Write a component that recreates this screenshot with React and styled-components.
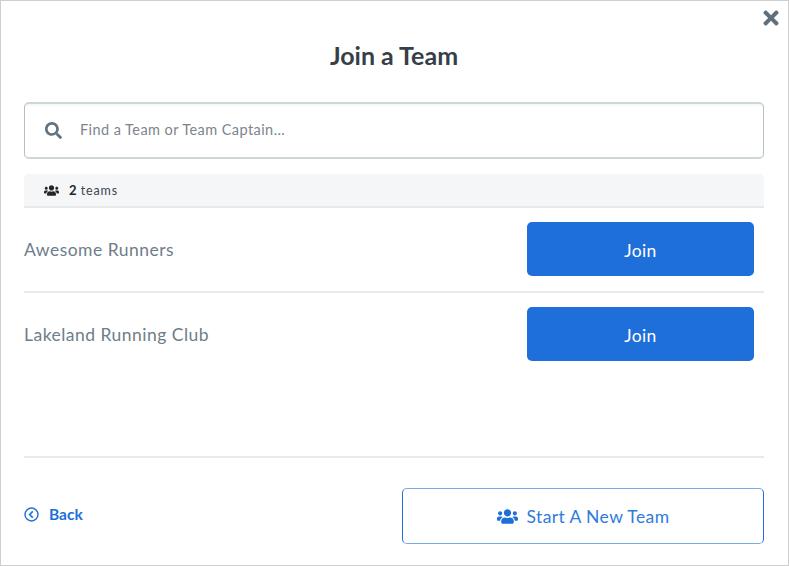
import React from 'react';
import styled, { createGlobalStyle } from 'styled-components';
import { FaSearch, FaTimes, FaUsers } from 'react-icons/fa';

const teams = ['Awesome Runners', 'Lakeland Running Club'];

function App() {
  return (
    <>
      <GlobalStyle />
      <Modal>
        <CloseButton>
          <FaTimes />
        </CloseButton>
        <Title>Join a Team</Title>

        <SearchBox>
          <SearchIcon>
            <FaSearch />
          </SearchIcon>
          <SearchInput placeholder='Find a Team or Team Captain...' />
        </SearchBox>

        <CountBar>
          <FaUsers />
          <CountText>
            <b>2</b> teams
          </CountText>
        </CountBar>

        <TeamList>
          {teams.map((team) => (
            <TeamRow key={team}>
              <TeamName>{team}</TeamName>
              <JoinButton>Join</JoinButton>
            </TeamRow>
          ))}
        </TeamList>

        <Footer>
          <BackLink>
            <svg width='15' height='15' viewBox='0 0 15 15' fill='none' stroke='currentColor'>
              <circle cx='7.5' cy='7.5' r='6.5' strokeWidth='1.4' />
              <path d='M8.8 4.4 5.7 7.5l3.1 3.1' strokeWidth='1.6' />
            </svg>
            Back
          </BackLink>
          <NewTeamButton>
            <FaUsers />
            Start A New Team
          </NewTeamButton>
        </Footer>
      </Modal>
    </>
  );
}

const GlobalStyle = createGlobalStyle`
  html, body {
    margin: 0;
    padding: 0;
    background: #fff;
  }

  body {
    font-family: Lato, 'Open Sans', sans-serif;
  }
`;

const Modal = styled.div`
  position: relative;
  box-sizing: border-box;
  width: 789px;
  height: 566px;
  padding: 0 24px 0 23px;
  border: 1px solid #cfcfcf;
  background: #fff;
  display: flex;
  flex-direction: column;
`;

const CloseButton = styled.div`
  position: absolute;
  top: 5px;
  right: 5px;
  width: 24px;
  height: 24px;
  display: flex;
  align-items: center;
  justify-content: center;
  color: #5f6f7c;
  font-size: 22px;
`;

const Title = styled.h1`
  margin: 0;
  padding-top: 40px;
  height: 61px;
  line-height: 28px;
  font-family: Lato, sans-serif;
  font-size: 25px;
  font-weight: 700;
  text-align: center;
  color: #363f48;
`;

const SearchBox = styled.div`
  box-sizing: border-box;
  height: 57px;
  display: flex;
  align-items: center;
  border: 1px solid #b4c0c6;
  border-top: 2px solid #ced6da;
  border-bottom: 2px solid #ced6da;
  border-radius: 5px;
  box-shadow: inset 0 3px 3px -2px #eef2f3;
  background: #fff;
`;

const SearchIcon = styled.div`
  width: 55px;
  padding-left: 20px;
  box-sizing: border-box;
  display: flex;
  color: #5f7383;
  font-size: 17px;
`;

const SearchInput = styled.input`
  flex: 1;
  padding: 0;
  margin-bottom: 2px;
  border: none;
  outline: none;
  font-family: Lato, sans-serif;
  font-size: 14.5px;
  letter-spacing: 0.43px;
  color: #3c4650;

  &::placeholder {
    color: #7c858c;
    opacity: 1;
  }
`;

const CountBar = styled.div`
  box-sizing: border-box;
  height: 34px;
  margin-top: 15px;
  padding: 0 20px;
  display: flex;
  align-items: center;
  gap: 10px;
  background: #f5f6f8;
  border-bottom: 2px solid #e7e9eb;
  border-radius: 5px 5px 0 0;
  color: #20262c;
  font-size: 15px;
`;

const CountText = styled.span`
  font-size: 12.5px;
  letter-spacing: 0.9px;
  color: #3c4650;

  b {
    font-size: 13px;
    letter-spacing: 0;
    color: #20262c;
  }
`;

const TeamList = styled.div`
  flex: 1;
`;

const TeamRow = styled.div`
  box-sizing: border-box;
  height: 85px;
  padding: 13px 10px 14px 0;
  display: flex;
  align-items: center;
  justify-content: space-between;
  border-bottom: 2px solid #e7e9eb;

  &:last-child {
    border-bottom-color: transparent;
  }
`;

const TeamName = styled.div`
  padding-top: 1px;
  font-size: 17.5px;
  letter-spacing: 0.48px;
  color: #6e7d8a;
`;

const JoinButton = styled.button`
  width: 227px;
  height: 54px;
  padding: 2px 0 0;
  border: none;
  border-radius: 5px;
  background: #1e6fd9;
  color: #fff;
  font-family: Lato, sans-serif;
  font-size: 17.5px;
  letter-spacing: 0.4px;
`;

const Footer = styled.div`
  height: 109px;
  box-sizing: border-box;
  border-top: 2px solid #e7e9eb;
  padding-top: 30px;
  display: flex;
  justify-content: space-between;
  align-items: flex-start;
`;

const BackLink = styled.div`
  height: 52px;
  display: flex;
  align-items: center;
  gap: 10px;
  color: #1e6fd9;
  font-size: 15.5px;
  font-weight: 700;
`;

const NewTeamButton = styled.button`
  box-sizing: border-box;
  width: 362px;
  height: 56px;
  display: flex;
  align-items: center;
  justify-content: center;
  gap: 9px;
  background: #fff;
  border: 1px solid #1e6fd9;
  border-top-color: #7aa9e8;
  border-bottom-color: #7aa9e8;
  border-radius: 5px;
  color: #2f7bdc;
  font-family: Lato, sans-serif;
  font-size: 17.5px;
  letter-spacing: 0.4px;

  svg {
    font-size: 21px;
    color: #1e6fd9;
  }
`;

export default App;
